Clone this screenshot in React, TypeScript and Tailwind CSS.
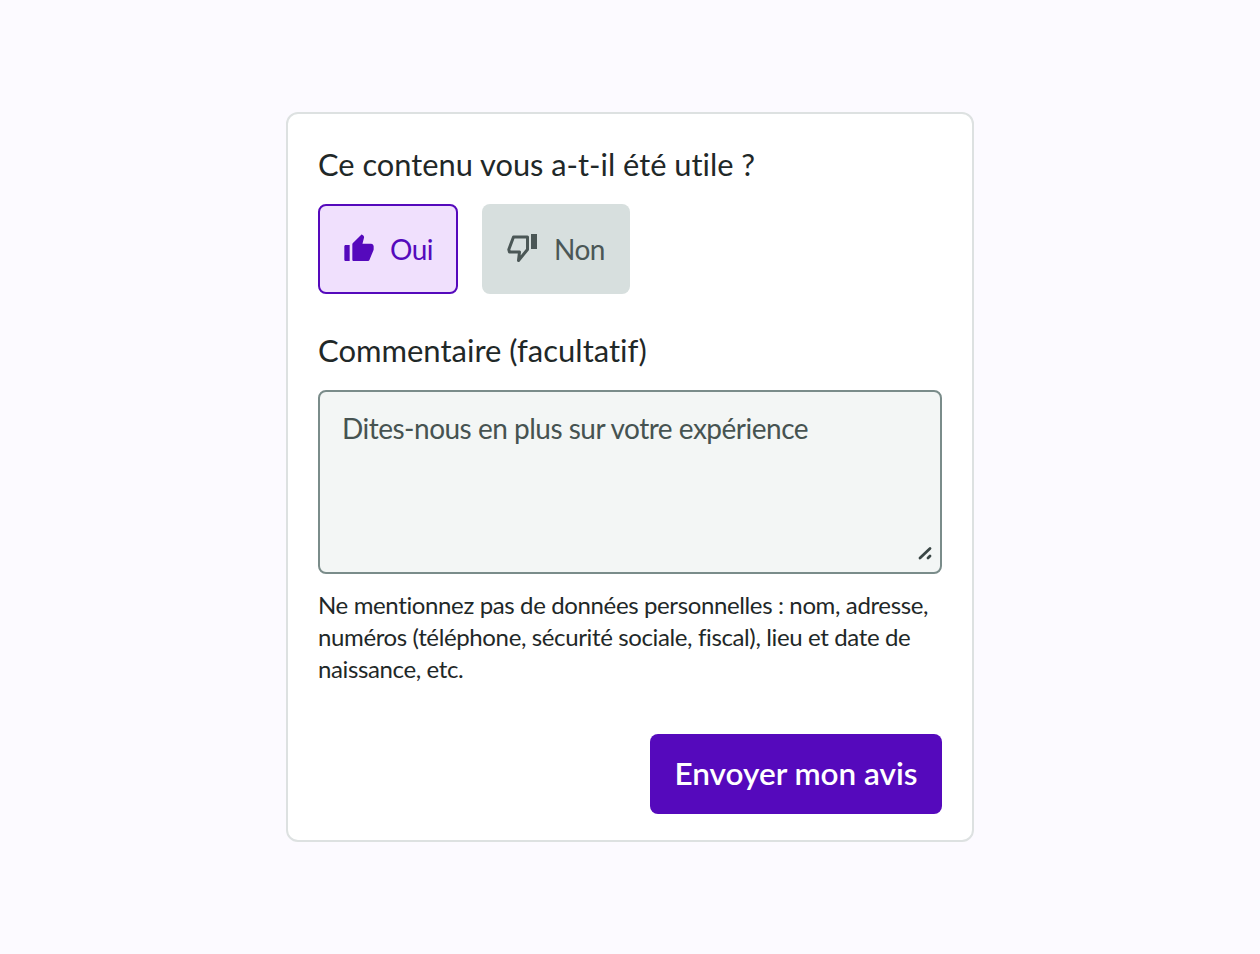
import { RiThumbUpFill } from 'react-icons/ri';

function ThumbDown() {
  return (
    <svg viewBox="3 2 32 32" className="size-8" fill="none" stroke="currentColor" strokeWidth="3" strokeLinejoin="round">
      <path d="M9.5 6H23.5V18.5L14.5 29.5L15.5 21H5.5L4.8 18.5Z" />
      <rect x="27" y="3" width="6" height="15" fill="currentColor" stroke="none" />
    </svg>
  );
}

export default function App() {
  return (
    <div className="flex min-h-[954px] items-start justify-center bg-[#fcfaff] pt-[112px] font-['Lato',sans-serif] text-[#1f2828] [font-variant-ligatures:none]">
      <form className="w-[688px] rounded-xl border-2 border-[#dde1e1] bg-white px-[30px] pt-[30px] pb-[26px]">
        <h2 className="pt-px text-[30.8px] leading-[40px]">Ce contenu vous a-t-il été utile ?</h2>

        <div className="mt-[19px] flex gap-6">
          <button type="button" className="flex h-[90px] w-[140px] items-center justify-center gap-[15px] rounded-lg border-2 border-[#5509bc] bg-[#f0e0fd] text-[28px] tracking-[-0.5px] text-[#5509bc]">
            <RiThumbUpFill className="size-8" />
            Oui
          </button>
          <button type="button" className="flex h-[90px] w-[148px] items-center justify-center gap-[15px] rounded-lg bg-[#d7dfde] text-[28px] tracking-[-0.5px] text-[#4b5756]">
            <ThumbDown />
            Non
          </button>
        </div>

        <label htmlFor="comment" className="mt-[36px] block text-[31px] leading-[40px]">
          Commentaire (facultatif)
        </label>
        <div className="relative mt-[20px]">
          <textarea
            id="comment"
            placeholder="Dites-nous en plus sur votre expérience"
            className="block h-[184px] w-full resize-none rounded-lg border-2 border-[#7a8c8a] bg-[#f3f6f5] px-[22px] py-[16px] text-[28px] leading-[40px] tracking-[-0.5px] outline-none placeholder:text-[#465351]"
          />
          <svg viewBox="0 0 14 14" className="absolute right-[10px] bottom-[14px] size-[14px]" stroke="#3a4645" strokeWidth="2.8" strokeLinecap="round">
            <path d="M2 12L12 2.5M10 12L12 10" />
          </svg>
        </div>

        <p className="mt-[15px] text-[24px] leading-8 tracking-[-0.37px]">
          Ne mentionnez pas de données personnelles : nom, adresse, numéros (téléphone, sécurité sociale, fiscal), lieu et date de naissance, etc.
        </p>

        <div className="mt-[49px] flex justify-end">
          <button type="submit" className="h-20 w-[292px] rounded-lg bg-[#5509bc] text-[31.5px] font-semibold text-white">
            Envoyer mon avis
          </button>
        </div>
      </form>
    </div>
  );
}
